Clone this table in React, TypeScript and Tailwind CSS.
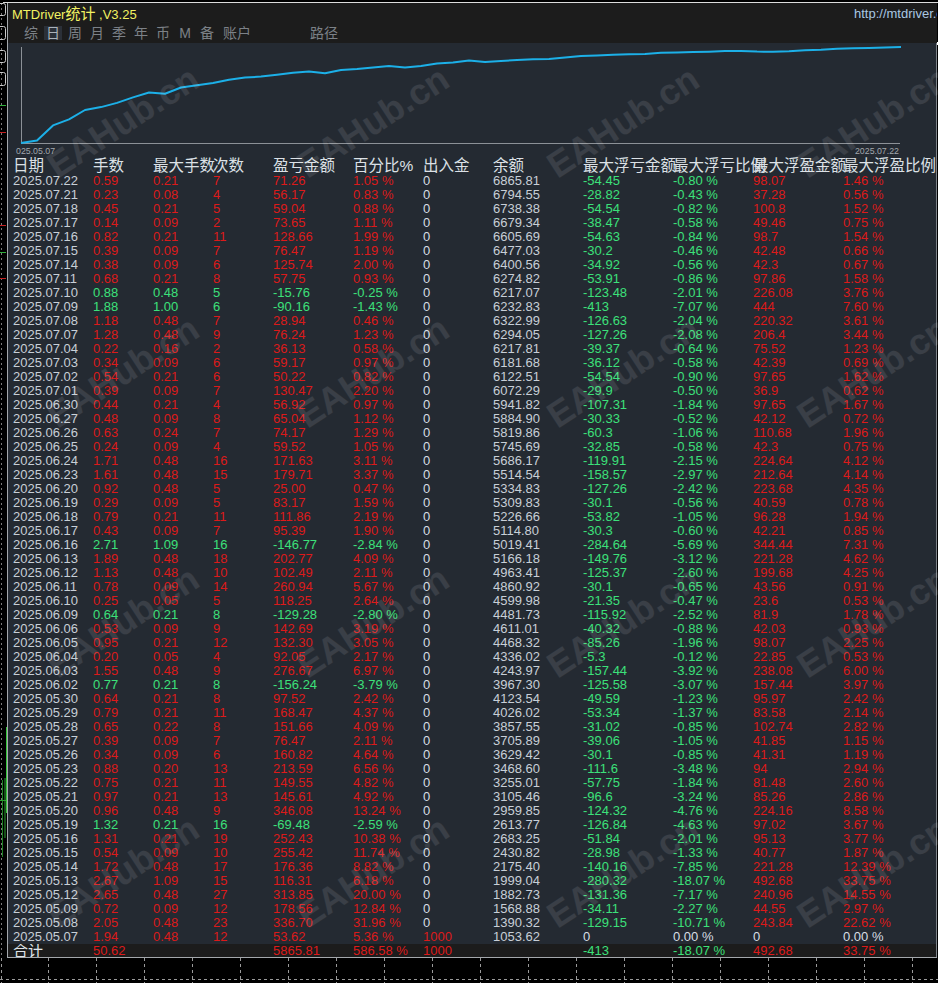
import React from "react";

type Row = string[];

const rows: Row[] = [
  ["2025.07.22", "0.59", "0.21", "7", "71.26", "1.05", "0", "6865.81", "-54.45", "-0.80", "98.07", "1.46"],
  ["2025.07.21", "0.23", "0.08", "4", "56.17", "0.83", "0", "6794.55", "-28.82", "-0.43", "37.28", "0.56"],
  ["2025.07.18", "0.45", "0.21", "5", "59.04", "0.88", "0", "6738.38", "-54.54", "-0.82", "100.8", "1.52"],
  ["2025.07.17", "0.14", "0.09", "2", "73.65", "1.11", "0", "6679.34", "-38.47", "-0.58", "49.46", "0.75"],
  ["2025.07.16", "0.82", "0.21", "11", "128.66", "1.99", "0", "6605.69", "-54.63", "-0.84", "98.7", "1.54"],
  ["2025.07.15", "0.39", "0.09", "7", "76.47", "1.19", "0", "6477.03", "-30.2", "-0.46", "42.48", "0.66"],
  ["2025.07.14", "0.38", "0.09", "6", "125.74", "2.00", "0", "6400.56", "-34.92", "-0.56", "42.3", "0.67"],
  ["2025.07.11", "0.68", "0.21", "8", "57.75", "0.93", "0", "6274.82", "-53.91", "-0.86", "97.86", "1.58"],
  ["2025.07.10", "0.88", "0.48", "5", "-15.76", "-0.25", "0", "6217.07", "-123.48", "-2.01", "226.08", "3.76"],
  ["2025.07.09", "1.88", "1.00", "6", "-90.16", "-1.43", "0", "6232.83", "-413", "-7.07", "444", "7.60"],
  ["2025.07.08", "1.18", "0.48", "7", "28.94", "0.46", "0", "6322.99", "-126.63", "-2.04", "220.32", "3.61"],
  ["2025.07.07", "1.28", "0.48", "9", "76.24", "1.23", "0", "6294.05", "-127.26", "-2.08", "206.4", "3.44"],
  ["2025.07.04", "0.22", "0.16", "2", "36.13", "0.58", "0", "6217.81", "-39.37", "-0.64", "75.52", "1.23"],
  ["2025.07.03", "0.34", "0.09", "6", "59.17", "0.97", "0", "6181.68", "-36.12", "-0.58", "42.39", "0.69"],
  ["2025.07.02", "0.54", "0.21", "6", "50.22", "0.82", "0", "6122.51", "-54.54", "-0.90", "97.65", "1.62"],
  ["2025.07.01", "0.39", "0.09", "7", "130.47", "2.20", "0", "6072.29", "-29.9", "-0.50", "36.9", "0.62"],
  ["2025.06.30", "0.44", "0.21", "4", "56.92", "0.97", "0", "5941.82", "-107.31", "-1.84", "97.65", "1.67"],
  ["2025.06.27", "0.48", "0.09", "8", "65.04", "1.12", "0", "5884.90", "-30.33", "-0.52", "42.12", "0.72"],
  ["2025.06.26", "0.63", "0.24", "7", "74.17", "1.29", "0", "5819.86", "-60.3", "-1.06", "110.68", "1.96"],
  ["2025.06.25", "0.24", "0.09", "4", "59.52", "1.05", "0", "5745.69", "-32.85", "-0.58", "42.3", "0.75"],
  ["2025.06.24", "1.71", "0.48", "16", "171.63", "3.11", "0", "5686.17", "-119.91", "-2.15", "224.64", "4.12"],
  ["2025.06.23", "1.61", "0.48", "15", "179.71", "3.37", "0", "5514.54", "-158.57", "-2.97", "212.64", "4.14"],
  ["2025.06.20", "0.92", "0.48", "5", "25.00", "0.47", "0", "5334.83", "-127.26", "-2.42", "223.68", "4.35"],
  ["2025.06.19", "0.29", "0.09", "5", "83.17", "1.59", "0", "5309.83", "-30.1", "-0.56", "40.59", "0.78"],
  ["2025.06.18", "0.79", "0.21", "11", "111.86", "2.19", "0", "5226.66", "-53.82", "-1.05", "96.28", "1.94"],
  ["2025.06.17", "0.43", "0.09", "7", "95.39", "1.90", "0", "5114.80", "-30.3", "-0.60", "42.21", "0.85"],
  ["2025.06.16", "2.71", "1.09", "16", "-146.77", "-2.84", "0", "5019.41", "-284.64", "-5.69", "344.44", "7.31"],
  ["2025.06.13", "1.89", "0.48", "18", "202.77", "4.09", "0", "5166.18", "-149.76", "-3.12", "221.28", "4.62"],
  ["2025.06.12", "1.13", "0.48", "10", "102.49", "2.11", "0", "4963.41", "-125.37", "-2.60", "199.68", "4.25"],
  ["2025.06.11", "0.78", "0.09", "14", "260.94", "5.67", "0", "4860.92", "-30.1", "-0.65", "43.56", "0.91"],
  ["2025.06.10", "0.25", "0.05", "5", "118.25", "2.64", "0", "4599.98", "-21.35", "-0.47", "23.6", "0.53"],
  ["2025.06.09", "0.64", "0.21", "8", "-129.28", "-2.80", "0", "4481.73", "-115.92", "-2.52", "81.9", "1.78"],
  ["2025.06.06", "0.53", "0.09", "9", "142.69", "3.19", "0", "4611.01", "-40.32", "-0.88", "42.03", "0.93"],
  ["2025.06.05", "0.95", "0.21", "12", "132.30", "3.05", "0", "4468.32", "-85.26", "-1.96", "98.07", "2.25"],
  ["2025.06.04", "0.20", "0.05", "4", "92.05", "2.17", "0", "4336.02", "-5.3", "-0.12", "22.85", "0.53"],
  ["2025.06.03", "1.55", "0.48", "9", "276.67", "6.97", "0", "4243.97", "-157.44", "-3.92", "238.08", "6.00"],
  ["2025.06.02", "0.77", "0.21", "8", "-156.24", "-3.79", "0", "3967.30", "-125.58", "-3.07", "157.44", "3.97"],
  ["2025.05.30", "0.64", "0.21", "8", "97.52", "2.42", "0", "4123.54", "-49.59", "-1.23", "95.97", "2.42"],
  ["2025.05.29", "0.79", "0.21", "11", "168.47", "4.37", "0", "4026.02", "-53.34", "-1.37", "83.58", "2.14"],
  ["2025.05.28", "0.65", "0.22", "8", "151.66", "4.09", "0", "3857.55", "-31.02", "-0.85", "102.74", "2.82"],
  ["2025.05.27", "0.39", "0.09", "7", "76.47", "2.11", "0", "3705.89", "-39.06", "-1.05", "41.85", "1.15"],
  ["2025.05.26", "0.34", "0.09", "6", "160.82", "4.64", "0", "3629.42", "-30.1", "-0.85", "41.31", "1.19"],
  ["2025.05.23", "0.88", "0.20", "13", "213.59", "6.56", "0", "3468.60", "-111.6", "-3.48", "94", "2.94"],
  ["2025.05.22", "0.75", "0.21", "11", "149.55", "4.82", "0", "3255.01", "-57.75", "-1.84", "81.48", "2.60"],
  ["2025.05.21", "0.97", "0.21", "13", "145.61", "4.92", "0", "3105.46", "-96.6", "-3.24", "85.26", "2.86"],
  ["2025.05.20", "0.96", "0.48", "9", "346.08", "13.24", "0", "2959.85", "-124.32", "-4.76", "224.16", "8.58"],
  ["2025.05.19", "1.32", "0.21", "16", "-69.48", "-2.59", "0", "2613.77", "-126.84", "-4.63", "97.02", "3.67"],
  ["2025.05.16", "1.31", "0.21", "19", "252.43", "10.38", "0", "2683.25", "-51.84", "-2.01", "95.13", "3.77"],
  ["2025.05.15", "0.54", "0.09", "10", "255.42", "11.74", "0", "2430.82", "-28.98", "-1.33", "40.77", "1.87"],
  ["2025.05.14", "1.72", "0.48", "17", "176.36", "8.82", "0", "2175.40", "-140.16", "-7.85", "221.28", "12.39"],
  ["2025.05.13", "2.67", "1.09", "15", "116.31", "6.18", "0", "1999.04", "-280.32", "-18.07", "492.68", "33.75"],
  ["2025.05.12", "2.65", "0.48", "27", "313.85", "20.00", "0", "1882.73", "-131.36", "-7.17", "240.96", "14.55"],
  ["2025.05.09", "0.72", "0.09", "12", "178.56", "12.84", "0", "1568.88", "-34.11", "-2.27", "44.55", "2.97"],
  ["2025.05.08", "2.05", "0.48", "23", "336.70", "31.96", "0", "1390.32", "-129.15", "-10.71", "243.84", "22.62"],
  ["2025.05.07", "1.94", "0.48", "12", "53.62", "5.36", "1000", "1053.62", "0", "0.00", "0", "0.00"],
];

const total: Row = ["合计", "50.62", "", "", "5865.81", "586.58", "1000", "", "-413", "-18.07", "492.68", "33.75"];

const headers = [
  "日期",
  "手数",
  "最大手数",
  "次数",
  "盈亏金额",
  "百分比%",
  "出入金",
  "余额",
  "最大浮亏金额",
  "最大浮亏比例",
  "最大浮盈金额",
  "最大浮盈比例",
];

const RED = "text-[#dc1a1a]";
const GREEN = "text-[#3ce07a]";
const LIGHT = "text-[#d8dee4]";
const DATEC = "text-[#c8cfd7]";

const COLS =
  "grid grid-cols-[80px_60px_60px_60px_80px_70px_70px_90px_90px_80px_90px_93px] pl-[5px]";

function cellColor(i: number, r: Row) {
  const neg = r[4].startsWith("-");
  if (i === 0) return DATEC;
  if (i >= 1 && i <= 5) return neg ? GREEN : RED;
  if (i === 6) return r[6] === "0" ? LIGHT : RED;
  if (i === 7) return DATEC;
  const zero = r[i] === "0" || r[i] === "0.00";
  if (i === 8 || i === 9) return zero ? LIGHT : GREEN;
  return zero ? LIGHT : RED;
}

function fmt(i: number, v: string) {
  return (i === 5 || i === 9 || i === 11) && v !== "" ? v + " %" : v;
}

const tabs = ["综", "日", "周", "月", "季", "年", "币", "M", "备"];

const wmX = ["left-[123px]", "left-[373px]", "left-[623px]", "left-[873px]"];
const wmY = ["top-[122px]", "top-[372px]", "top-[622px]", "top-[872px]"];

function EquityChart() {
  const chron = [...rows].reverse();
  let cum = 0;
  const vals = chron.map((r) => {
    cum += parseFloat(r[5]);
    return cum;
  });
  const S = Math.max(...vals);
  const pts = ["13,100"];
  vals.forEach((v, i) => {
    const x = 29 + 16 * i;
    const y = 100 - (v / S) * 96;
    pts.push(`${x},${y.toFixed(1)}`);
  });
  return (
    <svg width="928" height="115" className="block">
      <line x1="13.5" y1="4" x2="13.5" y2="100.5" stroke="#8c9197" strokeWidth="1" />
      <line x1="13" y1="100.5" x2="892" y2="100.5" stroke="#8c9197" strokeWidth="1" />
      <polyline
        points={pts.join(" ")}
        fill="none"
        stroke="#1cb0e8"
        strokeWidth="2"
        strokeLinejoin="round"
      />
      <text x="8" y="111" fontSize="8.8" fill="#a2a7ad" fontFamily="Liberation Sans, sans-serif">
        025.05.07
      </text>
      <text
        x="891"
        y="111"
        fontSize="8.8"
        fill="#a2a7ad"
        textAnchor="end"
        fontFamily="Liberation Sans, sans-serif"
      >
        2025.07.22
      </text>
    </svg>
  );
}

function LeftStrip() {
  return (
    <svg width="7" height="955" className="block">
      <line x1="1.5" y1="0" x2="1.5" y2="955" stroke="#7a7a7a" strokeDasharray="2 3" />
      <rect x="-6" y="0.5" width="11.5" height="12" rx="2" fill="none" stroke="#c8c8c8" />
      <rect x="-6" y="23.5" width="11.5" height="13" rx="2" fill="none" stroke="#c8c8c8" />
      <rect x="-6" y="47.5" width="11.5" height="12" rx="2" fill="none" stroke="#c8c8c8" />
      <rect x="-6" y="69.5" width="11.5" height="13" rx="2" fill="none" stroke="#c8c8c8" />
      <line x1="0" y1="102.5" x2="6" y2="102.5" stroke="#2fae3a" />
      <line x1="0" y1="129.5" x2="6" y2="129.5" stroke="#c42020" />
      <line x1="0" y1="222.5" x2="6" y2="222.5" stroke="#c42020" />
      <line x1="0" y1="249.5" x2="6" y2="249.5" stroke="#2fae3a" />
      <line x1="0" y1="275.5" x2="6" y2="275.5" stroke="#c42020" />
      <line x1="6.5" y1="724" x2="6.5" y2="810" stroke="#35c43a" />
      <line x1="5" y1="775" x2="5" y2="835" stroke="#2aa02e" />
      <line x1="2.5" y1="777" x2="2.5" y2="854" stroke="#1f7f24" />
      <line x1="0" y1="797.5" x2="6" y2="797.5" stroke="#2aa02e" />
    </svg>
  );
}

function BottomGrid() {
  const xs = Array.from({ length: 19 }, (_, k) => 48 * (k + 1) + 0.5);
  return (
    <svg width="938" height="25" className="block">
      {xs.map((x) => (
        <line key={x} x1={x} y1="0" x2={x} y2="25" stroke="#9a9a9a" strokeDasharray="3 3" />
      ))}
      <line x1="1.5" y1="0" x2="1.5" y2="25" stroke="#9a9a9a" strokeDasharray="3 3" />
      <line x1="0" y1="21.5" x2="938" y2="21.5" stroke="#9a9a9a" strokeDasharray="3 3" />
    </svg>
  );
}

export default function App() {
  return (
    <div className="relative w-[938px] h-[983px] overflow-hidden bg-black font-['Liberation_Sans','Noto_Sans_CJK_SC',sans-serif]">
      <div className="h-[2px]" />
      <div className="ml-[3px] h-px bg-[#dcdcdc]" />
      <div className="flex">
        <LeftStrip />
        <div className="flex w-[930px] flex-col border-l border-[#a4a8ac]">
          {/* title bar */}
          <div className="h-[40px] w-[929px] bg-[#1c1c1c]">
            <div className="flex h-[20px] items-center justify-between pl-[4px]">
              <div className="whitespace-nowrap text-[13px] leading-none text-[#f2f262]">
                MTDriver<span className="text-[15px]">统计</span> ,V3.25
              </div>
              <div className="w-[83px] shrink-0 overflow-hidden whitespace-nowrap text-[13px] leading-none text-[#a9c7e2]">
                http://mtdriver.cn
              </div>
            </div>
            <div className="flex h-[20px] items-center pl-[12px] text-[14px] leading-none text-[#7c8187]">
              {tabs.map((t) => (
                <div key={t} className="flex w-[22px] justify-center">
                  {t === "日" ? (
                    <span className="flex h-[14px] w-[18px] items-center justify-center bg-[#2b3038] text-[#aab2ba]">
                      {t}
                    </span>
                  ) : (
                    <span>{t}</span>
                  )}
                </div>
              ))}
              <div className="flex w-[38px] justify-center">账户</div>
              <div className="ml-[54px]">路径</div>
            </div>
          </div>

          {/* chart + table */}
          <div className="border-r border-[#7e848a] bg-[#242a32]">
            <EquityChart />
            <div className={`${COLS} h-[16px] whitespace-nowrap text-[15.5px] leading-[16px] text-[#dce1e6]`}>
              {headers.map((h) => (
                <div key={h}>{h}</div>
              ))}
            </div>
            {rows.map((r) => (
              <div key={r[0]} className={`${COLS} h-[14px] whitespace-nowrap text-[13px] leading-[14px]`}>
                {r.map((v, i) => (
                  <div key={i} className={cellColor(i, r)}>
                    {fmt(i, v)}
                  </div>
                ))}
              </div>
            ))}
            <div className={`${COLS} h-[13px] overflow-hidden whitespace-nowrap bg-[#1c1c1c] text-[13px] leading-[14px]`}>
              {total.map((v, i) => (
                <div key={i} className={i === 0 ? "text-[15px] text-[#dfe4e8]" : cellColor(i, total)}>
                  {fmt(i, v)}
                </div>
              ))}
            </div>
          </div>
          <div className="h-px w-[930px] -ml-px bg-[#a4a8ac]" />
        </div>
        <div className="w-px">
          <div className="mt-[39px] h-[3px] w-px bg-white" />
        </div>
      </div>
      <BottomGrid />

      {/* watermark */}
      {wmY.map((y) =>
        wmX.map((x) => (
          <div
            key={x + y}
            className={`pointer-events-none absolute ${x} ${y} -translate-x-1/2 -translate-y-1/2 -rotate-[33deg] select-none whitespace-nowrap text-[36px] font-bold leading-none text-white/10`}
          >
            EAHub.cn
          </div>
        ))
      )}
    </div>
  );
}
